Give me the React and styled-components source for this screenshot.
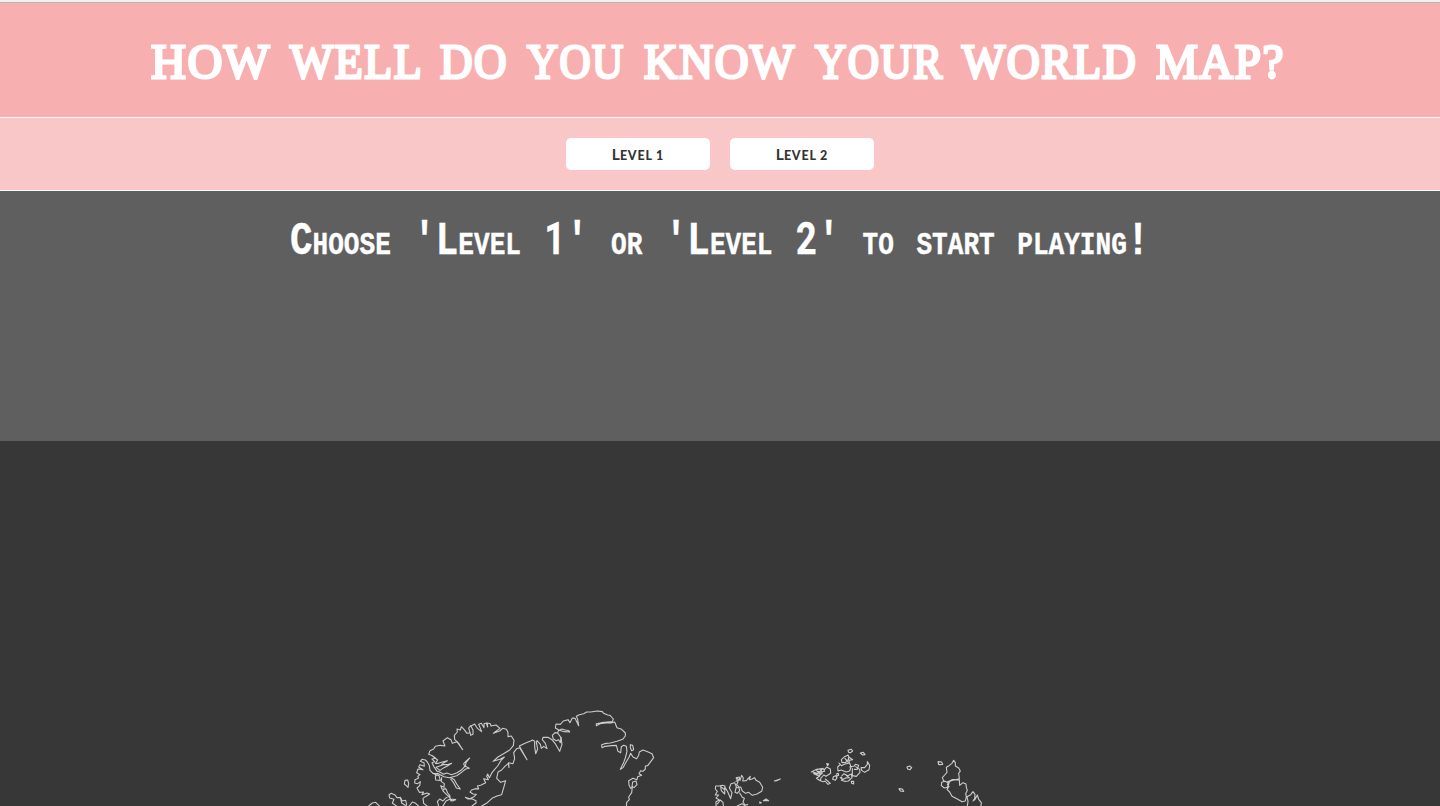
import React from "react";
import styled, { createGlobalStyle } from "styled-components";

const GlobalStyle = createGlobalStyle`
  * { box-sizing: border-box; }
  html, body { margin: 0; padding: 0; overflow: hidden; background: #373737; }
`;

const Page = styled.div`
  display: flex;
  flex-direction: column;
  width: 1440px;
  height: 806px;
  overflow: hidden;
`;

const TopEdge = styled.div`
  flex: none;
  height: 3px;
  background: #f1f1f1;
  border-bottom: 1px solid #b1b6b8;
`;

const Header = styled.header`
  flex: none;
  height: 115px;
  padding: 28px 0 0 151px;
  background: #f8afaf;
  border-bottom: 1px solid #fff;
`;

const Title = styled.h1`
  display: flex;
  gap: 19px;
  margin: 0;
  color: #fff;
  font: 400 49px/62px "Liberation Serif", serif;
  letter-spacing: 1.6px;
  -webkit-text-stroke: 2.8px #fff;
`;

const Word = styled.span`
  flex: none;
  width: ${(p) => p.$width}px;
  white-space: nowrap;
`;

const WordShape = styled.span`
  display: inline-block;
  transform: scaleX(${(p) => p.$scale});
  transform-origin: 0 50%;
`;

const Levels = styled.nav`
  flex: none;
  display: flex;
  justify-content: center;
  gap: 20px;
  height: 73px;
  padding-top: 20px;
  background: #f9c7c7;
  border-bottom: 1px solid #fff;
`;

const LevelButton = styled.button`
  width: 144px;
  height: 32px;
  padding: 1px 0 0;
  border: 0;
  border-radius: 5px;
  background: #fff;
  color: #333;
  font: 700 15.5px/30px Lato, sans-serif;
`;

const SmallCaps = styled.span`
  font-size: 12.5px;
  font-weight: 900;
  letter-spacing: 0.8px;
  text-transform: uppercase;
`;

const Prompt = styled.section`
  flex: none;
  height: 250px;
  padding: 23px 0 0 290px;
  background: #5f5f5f;
`;

const PromptText = styled.p`
  width: max-content;
  margin: 0;
  color: #fff;
  font: 700 46px/54px "Liberation Mono", monospace;
  font-variant: small-caps;
  white-space: pre;
  transform: scaleX(0.8155);
  transform-origin: 0 50%;
  -webkit-text-stroke: 0.4px #fff;
`;

const Digit = styled.span`
  display: inline-block;
  width: 27.6px;
  text-align: center;
  font-family: Roboto, sans-serif;
  font-size: 44px;
  line-height: 50px;
`;

const MapPanel = styled.main`
  flex: none;
  height: 365px;
  background: #373737;
`;

const Outline = styled.svg`
  display: block;
  fill: none;
  stroke: #cccccc;
  stroke-width: 3.3;
  stroke-linejoin: round;
  stroke-linecap: round;
`;

const words = [
  ["HOW", 120, 0.985],
  ["WELL", 131, 0.935],
  ["DO", 68, 0.92],
  ["YOU", 98, 0.88],
  ["KNOW", 152, 0.955],
  ["YOUR", 128, 0.885],
  ["WORLD", 175, 0.935],
  ["MAP?", 128, 0.96],
];

function WorldMap() {
  return (
    <Outline width="1440" height="365" viewBox="0 441 1440 365">
      <g transform="translate(350 700) scale(.33333)">
        <path d="M262 215L251 199L246 188L254 185L246 177L257 175L247 167L236 163L240 152L251 147L256 139L271 136L285 138L279 123L292 113L303 119L307 130L321 125L314 119L313 106L322 96L321 87L331 90L334 80L342 88L351 100L360 98L356 84L362 77L369 90L369 103L362 106L360 96M362 79L374 72L382 85L395 95L386 73L394 70L402 83L402 71L409 69L413 81L412 69L421 71L423 78L438 75L450 85L435 96L430 100L449 93L458 85L469 88L474 97L474 110L484 108L492 121L490 137L479 150L463 160L444 171L429 184L450 178L463 171L454 180L443 198L434 208L426 218L418 233L413 222L410 229L415 239L401 236L407 248L392 256L382 258L386 267L376 266L365 270L360 276L369 282L379 283L372 290L359 296L346 292L354 297L367 297L378 302L378 309L366 318"/>
        <path d="M321 125L338 149L325 128M249 169L263 180L256 190L265 190L277 186L292 182L282 188L275 193L291 194L305 190L292 198L282 203L270 211L258 202L276 196M265 214L281 223L290 219L305 224L321 218L333 211L344 200L341 191L349 183L359 174L348 188L346 199L358 205L347 207L338 214L331 220L320 227L309 230L298 233L282 230L265 221L249 220L240 211L238 197L232 186L226 180L216 178L211 184L222 188L223 199L210 194L206 201L219 209L204 207L200 218L210 224L203 229L206 234L195 239L194 249L203 251L211 245L209 257L201 264L208 277L221 276L216 284L231 279L239 282L226 290L219 295L221 310L231 318"/>
        <path d="M249 220L259 225L267 226L271 241L257 240L256 228L263 224M275 233L274 245L283 251L282 262L272 257L276 267L288 267L293 279L299 286L286 295L279 303L269 297L262 305L266 318M302 237L310 247L319 264L331 267L320 252L313 239L303 233M299 286L301 297L317 299L307 303L301 297L288 303L279 318M286 265L278 272L290 284L299 293L303 303"/>
        <path d="M165 241L173 240L176 250L174 262L168 256L163 252ZM56 318L67 309L77 307L83 313L88 318M139 318L127 309L132 298L119 294L117 285L123 280L134 284L141 293L151 292L157 303L167 301L170 314M151 292L155 309L169 318M178 318L187 306L197 310L205 318"/>
        <path d="M395 318L412 308L426 295L441 288L455 284L462 260L467 242L452 247L440 235L444 216L455 210L464 200L475 190L477 203L476 188L489 191L494 176L491 158L500 146L509 143L531 179L513 147L508 138L525 130L542 123L547 120L554 124L554 140L557 161L563 147L559 127L561 122L571 133L574 145L581 139L591 146L586 130L577 119L579 112L594 112L606 119L615 130L629 154L636 133L633 113L623 99L625 92L635 87L646 90L657 92L659 96L643 95L628 91L616 84L618 72L631 73L640 63L654 59L660 68L667 54L675 55L681 67L686 77L683 58L679 49L688 44L701 41L710 36L722 36L742 33L757 35L761 40L773 45L780 46L790 57L787 65L771 66L754 68L739 71L739 77L750 71L768 69L783 69L794 66L801 83L815 88L826 99L826 108L818 118L801 124L781 129L764 131L755 134L756 143L765 139L785 137L799 136L804 154L812 158L814 140L821 136L829 139L831 154L826 174L820 190L811 208L820 202L828 187L837 172L842 160L849 171L860 176L866 166L868 156L879 150L893 155L906 161L911 173L902 185L893 197L886 198L886 207L879 214L872 212L867 221L875 226L863 230L861 239L849 235L836 242L837 255L842 265L847 261L845 278L836 291L838 299L830 307L829 318"/>
        <path d="M623 99L615 98L607 106L610 117L619 122L626 119L631 128L633 113M841 134L848 136L851 149L845 152L841 143ZM848 246L858 243L861 254L852 263L846 259Z"/>
      </g>
      <g transform="translate(700 735) scale(.33333)">
        <path d="M48 213L48 200L58 195L48 189L56 180L46 180L52 169L46 162L47 153L58 153L67 151L75 153L73 164L62 154L64 167L74 177L75 157L82 168L92 191L96 173L88 159L93 146L104 143L109 155L105 172L112 175L119 167L116 155L110 149L114 140L109 128L120 136L125 121L130 129L128 138L139 137L143 132L151 124L148 134L156 132L164 128L168 136L179 142L188 157L185 169L171 177L157 181L146 172L137 175L127 168L122 156L111 158M119 174L127 187L133 190L129 201L135 210L143 209M52 207L61 195L69 202L70 213M112 213L126 206L136 213M108 129L118 126L119 134L108 139"/>
        <path d="M223 138L241 132L230 137ZM179 201L184 203L180 205ZM190 197L198 192L206 197L195 197Z"/>
        <path d="M334 111L350 103L366 101L360 110L349 107L363 117L341 116L357 123L367 114L362 102L374 103L380 96L391 102L392 115L378 124L371 120L363 129L361 137L349 130L359 124M337 110L350 115L374 109L369 100M380 86L386 87L383 92ZM376 132L391 145L384 148L375 138L370 140L357 136M400 125L407 122L411 128L406 136L398 133ZM410 116L415 115L416 121L411 123ZM421 128L428 134L424 126"/>
        <path d="M424 74L434 65L444 60L447 67L458 74L449 76L440 75L438 82L426 83ZM445 68L448 81L443 81L435 70M417 84L424 92L435 87L449 84L453 96L449 108L439 111L423 105L414 108L413 96L421 88M449 96L463 93L466 88L476 91L472 103L463 103M457 101L457 122L469 124L480 112L479 103L467 95M483 98L494 98L502 88L502 80L509 91L507 104L494 112L485 106ZM426 122L432 116L443 122L454 117L456 128L445 138L434 139L424 136L437 129L448 128L439 122"/>
        <path d="M444 46L454 43L458 48L452 53L446 52ZM481 54L490 52L495 59L488 60ZM454 139L461 139L461 147L455 145Z"/>
      </g>
      <g transform="translate(870 740) scale(.33333)">
        <path d="M111 81L119 78L125 83L120 89L113 87ZM204 65L215 66L218 73L206 74ZM87 146L97 147L101 154L91 153Z"/>
        <path d="M251 61L256 68L256 78L266 84L271 93L266 100L268 116L256 119L246 119L240 122L231 126L221 123L217 113L224 105L231 97L229 82L237 77L246 70ZM225 124L237 130L232 142L223 144L214 137L215 127ZM240 124L251 120L268 119L269 136L279 128L288 132L289 142L292 151L287 161L289 170L286 183L276 185L262 177L246 169L239 156L231 148L237 139L232 133ZM292 198L294 184L291 170L302 164L309 155L315 163L314 180L322 165L326 178L334 188L333 198M309 183L314 176"/>
      </g>
    </Outline>
  );
}

export default function App() {
  return (
    <>
      <GlobalStyle />
      <Page>
        <TopEdge />
        <Header>
          <Title>
            {words.map(([text, width, scale], i) => (
              <Word key={i} $width={width}>
                <WordShape $scale={scale}>{text}</WordShape>
              </Word>
            ))}
          </Title>
        </Header>
        <Levels>
          <LevelButton>L<SmallCaps>evel 1</SmallCaps></LevelButton>
          <LevelButton>L<SmallCaps>evel 2</SmallCaps></LevelButton>
        </Levels>
        <Prompt>
          <PromptText>
            Choose 'Level <Digit>1</Digit>' or 'Level <Digit>2</Digit>' to start playing!
          </PromptText>
        </Prompt>
        <MapPanel>
          <WorldMap />
        </MapPanel>
      </Page>
    </>
  );
}
